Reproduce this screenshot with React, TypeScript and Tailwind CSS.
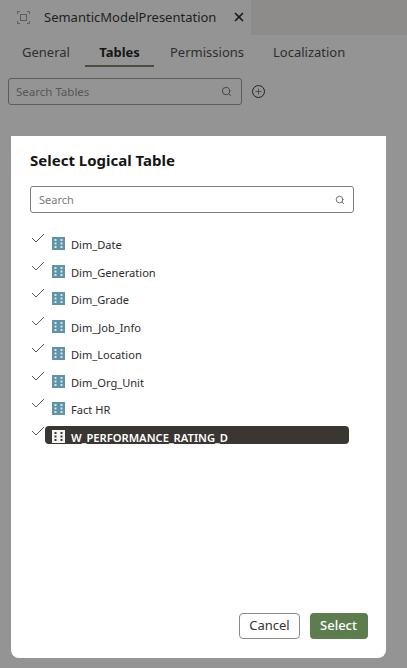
import { Plus, Search, X } from 'lucide-react';

const tables = [
  'Dim_Date',
  'Dim_Generation',
  'Dim_Grade',
  'Dim_Job_Info',
  'Dim_Location',
  'Dim_Org_Unit',
  'Fact HR',
  'W_PERFORMANCE_RATING_D',
];

function TableIcon({ selected }: { selected: boolean }) {
  const body = selected ? '#f4f4f2' : '#5f93a6';
  const cells = selected ? '#3a3631' : '#d6e6ec';
  return (
    <svg width="13" height="13" viewBox="0 0 13 13" className="shrink-0">
      <rect width="13" height="13" fill={body} />
      {[2, 5.5, 9].map((y) => (
        <g key={y} fill={cells}>
          <rect x="2.5" y={y} width="2" height="2" />
          <rect x="8.5" y={y} width="2" height="2" />
        </g>
      ))}
    </svg>
  );
}

function Check() {
  return (
    <svg width="14" height="10" viewBox="0 0 14 10" fill="none" stroke="#5a5a5a" strokeWidth="1" className="block shrink-0">
      <path d="M1 5l4 4 8-8" />
    </svg>
  );
}

export default function App() {
  return (
    <div className="relative h-[668px] w-[407px] overflow-hidden bg-[#949494] font-['Noto_Sans','Open_Sans',sans-serif]">
      <div className="flex h-[35px] bg-[#8d8c8b]">
        <div className="flex w-[251px] items-center bg-[#949494] pl-[17px]">
          <svg width="13" height="13" viewBox="0 0 13 13" fill="none" stroke="#5e5e5e" className="shrink-0">
            <path d="M0.5 3V0.5H3M10 0.5h2.5V3M12.5 10v2.5H10M3 12.5H0.5V10" />
            <rect x="3.5" y="3.5" width="6" height="6" />
          </svg>
          <span className="ml-[14px] text-[13px] text-[#1f1f1f]">SemanticModelPresentation</span>
          <X size={14} strokeWidth={3} className="ml-[16px] -translate-y-px text-[#1c1c1c]" />
        </div>
      </div>

      <div className="flex h-[32px] pl-[22px] text-[13px] text-[#2e2e2e]">
        <span className="w-[48px] pt-[8px]">General</span>
        <span className="ml-[15px] h-[32px] w-[69px] border-b-2 border-[#47503d] pt-[8px] text-center font-bold text-[#161616]">Tables</span>
        <span className="ml-[16px] w-[74px] pt-[8px]">Permissions</span>
        <span className="ml-[29px] pt-[8px]">Localization</span>
      </div>

      <div className="mt-[11px] flex items-center pl-[8px]">
        <div className="flex h-[27px] w-[234px] items-center justify-between rounded-[3px] border border-[#5c5c5c] pl-[7px] pr-[9px]">
          <span className="text-[11.5px] text-[#565656]">Search Tables</span>
          <Search size={11} className="text-[#3f3f3f]" />
        </div>
        <div className="ml-[10px] flex size-[13px] items-center justify-center rounded-full border border-[#222]">
          <Plus size={9} strokeWidth={1.5} className="text-[#222]" />
        </div>
      </div>

      <div className="absolute left-[11px] top-[136px] flex h-[522px] w-[375px] flex-col rounded-b-lg bg-white pl-[19px] pr-[32px]">
        <h2 className="mt-[12px] text-[15px] leading-[24px] font-bold text-[#161513]">Select Logical Table</h2>

        <div className="mt-[14px] flex h-[27px] w-[324px] items-center justify-between rounded-[3px] border border-[#7d7d7d] pl-[8px] pr-[8px]">
          <span className="translate-y-px text-[11px] text-[#7a7a7a]">Search</span>
          <Search size={10} className="text-[#555]" />
        </div>

        <ul className="mt-[19px] flex flex-col gap-[7.5px]">
          {tables.map((name, i) => {
            const selected = i === tables.length - 1;
            return (
              <li key={name} className="relative flex h-[20px] items-center">
                <span className="absolute left-[1px] top-[1px]"><Check /></span>
                <div className={`ml-[15px] flex h-[18px] w-[304px] items-start rounded-[4px] pl-[7px] pt-[4px] leading-[14px] ${selected ? 'overflow-hidden bg-[#3a3631] text-[11.2px] font-semibold text-white' : 'text-[11.1px] text-[#2b2b2b]'}`}>
                  <TableIcon selected={selected} />
                  <span className="ml-[6px] mt-px">{name}</span>
                </div>
              </li>
            );
          })}
        </ul>

        <div className="mt-auto mb-[19px] -mr-[14px] flex justify-end gap-[10px]">
          <button className="h-[26px] w-[61px] rounded-[4px] border border-[#8a8a8a] bg-white text-[13px] text-[#333]">Cancel</button>
          <button className="h-[26px] w-[58px] rounded-[4px] bg-[#5e7d4f] pr-px text-[13px] font-medium text-white">Select</button>
        </div>
      </div>
    </div>
  );
}
